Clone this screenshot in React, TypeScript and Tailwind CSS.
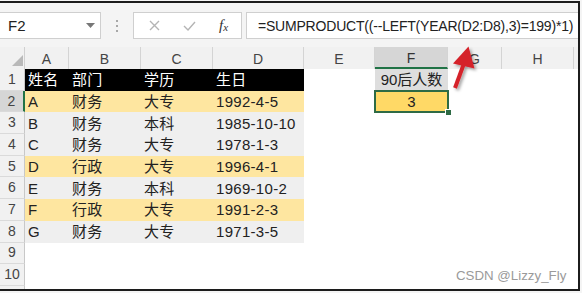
import React from "react";

type Band = "head" | "y" | "g" | "none";
const rows: { n: number; band: Band; c: string[] }[] = [
  { n: 1, band: "head", c: ["姓名", "部门", "学历", "生日"] },
  { n: 2, band: "y", c: ["A", "财务", "大专", "1992-4-5"] },
  { n: 3, band: "g", c: ["B", "财务", "本科", "1985-10-10"] },
  { n: 4, band: "g", c: ["C", "财务", "大专", "1978-1-3"] },
  { n: 5, band: "y", c: ["D", "行政", "大专", "1996-4-1"] },
  { n: 6, band: "g", c: ["E", "财务", "本科", "1969-10-2"] },
  { n: 7, band: "y", c: ["F", "行政", "大专", "1991-2-3"] },
  { n: 8, band: "g", c: ["G", "财务", "大专", "1971-3-5"] },
  { n: 9, band: "none", c: [] },
  { n: 10, band: "none", c: [] },
  { n: 11, band: "none", c: [] },
];

const bandCls: Record<Band, string> = {
  head: "bg-black text-white",
  y: "bg-[#fee6a0] text-[#222]",
  g: "bg-[#efefef] text-[#222]",
  none: "",
};

const dataW = ["w-[44px]", "w-[72px]", "w-[72px]", "w-[91px]"];

const colHeads = [
  { l: "A", w: "w-[44px]" },
  { l: "B", w: "w-[72px]" },
  { l: "C", w: "w-[72px]" },
  { l: "D", w: "w-[91px]" },
  { l: "E", w: "w-[71px]" },
  { l: "F", w: "w-[73px]", sel: true },
  { l: "G", w: "w-[54px]" },
  { l: "H", w: "w-[72px]" },
];

export default function App() {
  return (
    <div className="w-[582px] h-[293px] bg-[#f4f4f4] pt-[1px] relative overflow-hidden font-['Liberation_Sans','Noto_Sans_CJK_SC',sans-serif]">
      <div className="w-[580px] h-[290px] border-t-2 border-r-2 border-b-2 border-[#1c1c1c] flex flex-col overflow-hidden">
        {/* Toolbar */}
        <div className="h-[44px] shrink-0 bg-[#f4f4f4] flex items-start pt-[9px]">
          <div className="w-[101px] h-[27px] bg-white border border-[#cfcfcf] border-l-0 flex items-center justify-between pl-[8px] pr-[5px]">
            <span className="text-[15px] text-[#222] leading-none">F2</span>
            <svg width="9" height="6" viewBox="0 0 9 6">
              <polygon points="0,0 9,0 4.5,5" fill="#777" />
            </svg>
          </div>
          <div className="w-[32px] h-[27px] flex flex-col items-center justify-center gap-[3px]">
            <span className="w-[2px] h-[2px] bg-[#a8a8a8]" />
            <span className="w-[2px] h-[2px] bg-[#a8a8a8]" />
            <span className="w-[2px] h-[2px] bg-[#a8a8a8]" />
          </div>
          <div className="w-[109px] h-[27px] bg-white border border-[#cfcfcf] flex items-center">
            <div className="w-[38px] flex justify-center pl-[2px]">
              <svg width="11" height="11" viewBox="0 0 11 11">
                <path d="M1 1 L10 10 M10 1 L1 10" stroke="#b4b4b4" strokeWidth="1.4" />
              </svg>
            </div>
            <div className="w-[34px] flex justify-center">
              <svg width="13" height="10" viewBox="0 0 13 10">
                <path d="M1 5 L5 9 L12 1" stroke="#b4b4b4" strokeWidth="1.4" fill="none" />
              </svg>
            </div>
            <div className="w-[35px] flex justify-center items-center font-['Liberation_Serif',serif] italic text-[#333] leading-none">
              <span className="text-[15px]">f</span>
              <span className="text-[11px] mt-[3px]">x</span>
            </div>
          </div>
          <div className="w-[4px]" />
          <div className="flex-1 h-[27px] bg-white border border-[#cfcfcf] border-r-0 flex items-center pl-[11px]">
            <span className="text-[14px] text-[#222] leading-none tracking-[-0.2px] whitespace-nowrap">
              =SUMPRODUCT((--LEFT(YEAR(D2:D8),3)=199)*1)
            </span>
          </div>
        </div>

        {/* Column headers */}
        <div className="h-[22px] shrink-0 flex bg-[#f1f1f1] text-[14px] text-[#444]">
          <div className="w-[25px] h-full border-r border-[#d0d0d0] relative">
            <svg className="absolute left-0 top-0" width="25" height="22" viewBox="0 0 25 22">
              <polygon points="23,8 23,19 12,19" fill="#b9b9b9" />
            </svg>
          </div>
          {colHeads.map((h) => (
            <div
              key={h.l}
              className={`${h.w} h-full flex items-center justify-center border-r border-[#d4d4d4] ${
                h.sel ? "bg-[#d6d6d6] border-b-2 border-b-[#217346] text-[#333] pt-[2px]" : "pt-[2px]"
              }`}
            >
              {h.l}
            </div>
          ))}
          <div className="flex-1" />
        </div>

        {/* Rows */}
        <div className="flex-1 flex flex-col bg-white">
          {rows.map((r) => (
            <div key={r.n} className="h-[21.7px] shrink-0 flex">
              <div
                className={`w-[25px] h-full flex items-center justify-center text-[14px] text-[#444] border-b border-[#dadada] ${
                  r.n === 2
                    ? "bg-[#d6d6d6] border-r-2 border-r-[#217346]"
                    : "bg-[#f1f1f1] border-r border-r-[#c8c8c8]"
                }`}
              >
                {r.n}
              </div>
              {dataW.map((w, i) => (
                <div
                  key={i}
                  className={`${w} h-full flex items-center pl-[3px] text-[15px] leading-none whitespace-nowrap tracking-[0.3px] ${bandCls[r.band]}`}
                >
                  {r.c[i] ?? ""}
                </div>
              ))}
              <div className="w-[71px] h-full" />
              <div
                className={`w-[73px] h-full relative flex items-center justify-center text-[15px] leading-none text-[#222] ${
                  r.n === 1 ? "bg-[#dedede]" : r.n === 2 ? "bg-[#ffd966]" : ""
                }`}
              >
                {r.n === 1 ? "90后人数" : r.n === 2 ? "3" : ""}
                {r.n === 2 && (
                  <>
                    <div className="absolute -left-[1px] -top-[1px] -right-[1px] -bottom-[1px] border-2 border-[#2e6b45]" />
                    <div className="absolute -right-[4px] -bottom-[4px] w-[7px] h-[7px] bg-[#2e6b45] border border-white" />
                  </>
                )}
              </div>
              <div className="w-[54px] h-full" />
              <div className="w-[72px] h-full" />
              <div className="flex-1 h-full" />
            </div>
          ))}
        </div>
      </div>

      {/* Annotation overlay */}
      <svg className="absolute left-0 top-0 pointer-events-none" width="582" height="293" viewBox="0 0 582 293">
        <defs>
          <filter id="sh" x="-20%" y="-50%" width="140%" height="300%">
            <feDropShadow dx="2" dy="2" stdDeviation="1.5" floodColor="#000" floodOpacity="0.35" />
          </filter>
        </defs>
        <line x1="264" y1="41" x2="573" y2="41" stroke="#d5222a" strokeWidth="3" filter="url(#sh)" />
        <g filter="url(#sh)">
          <line x1="455" y1="88" x2="464.5" y2="62" stroke="#d5222a" strokeWidth="4" />
          <polygon points="468.5,46.5 453,63.5 474.5,68.5" fill="#d5222a" />
        </g>
      </svg>

      {/* Watermark */}
      <div className="absolute left-[456px] top-[269px] text-[13.3px] text-[#9a9a9a] leading-none whitespace-nowrap">
        CSDN @Lizzy_Fly
      </div>
    </div>
  );
}
